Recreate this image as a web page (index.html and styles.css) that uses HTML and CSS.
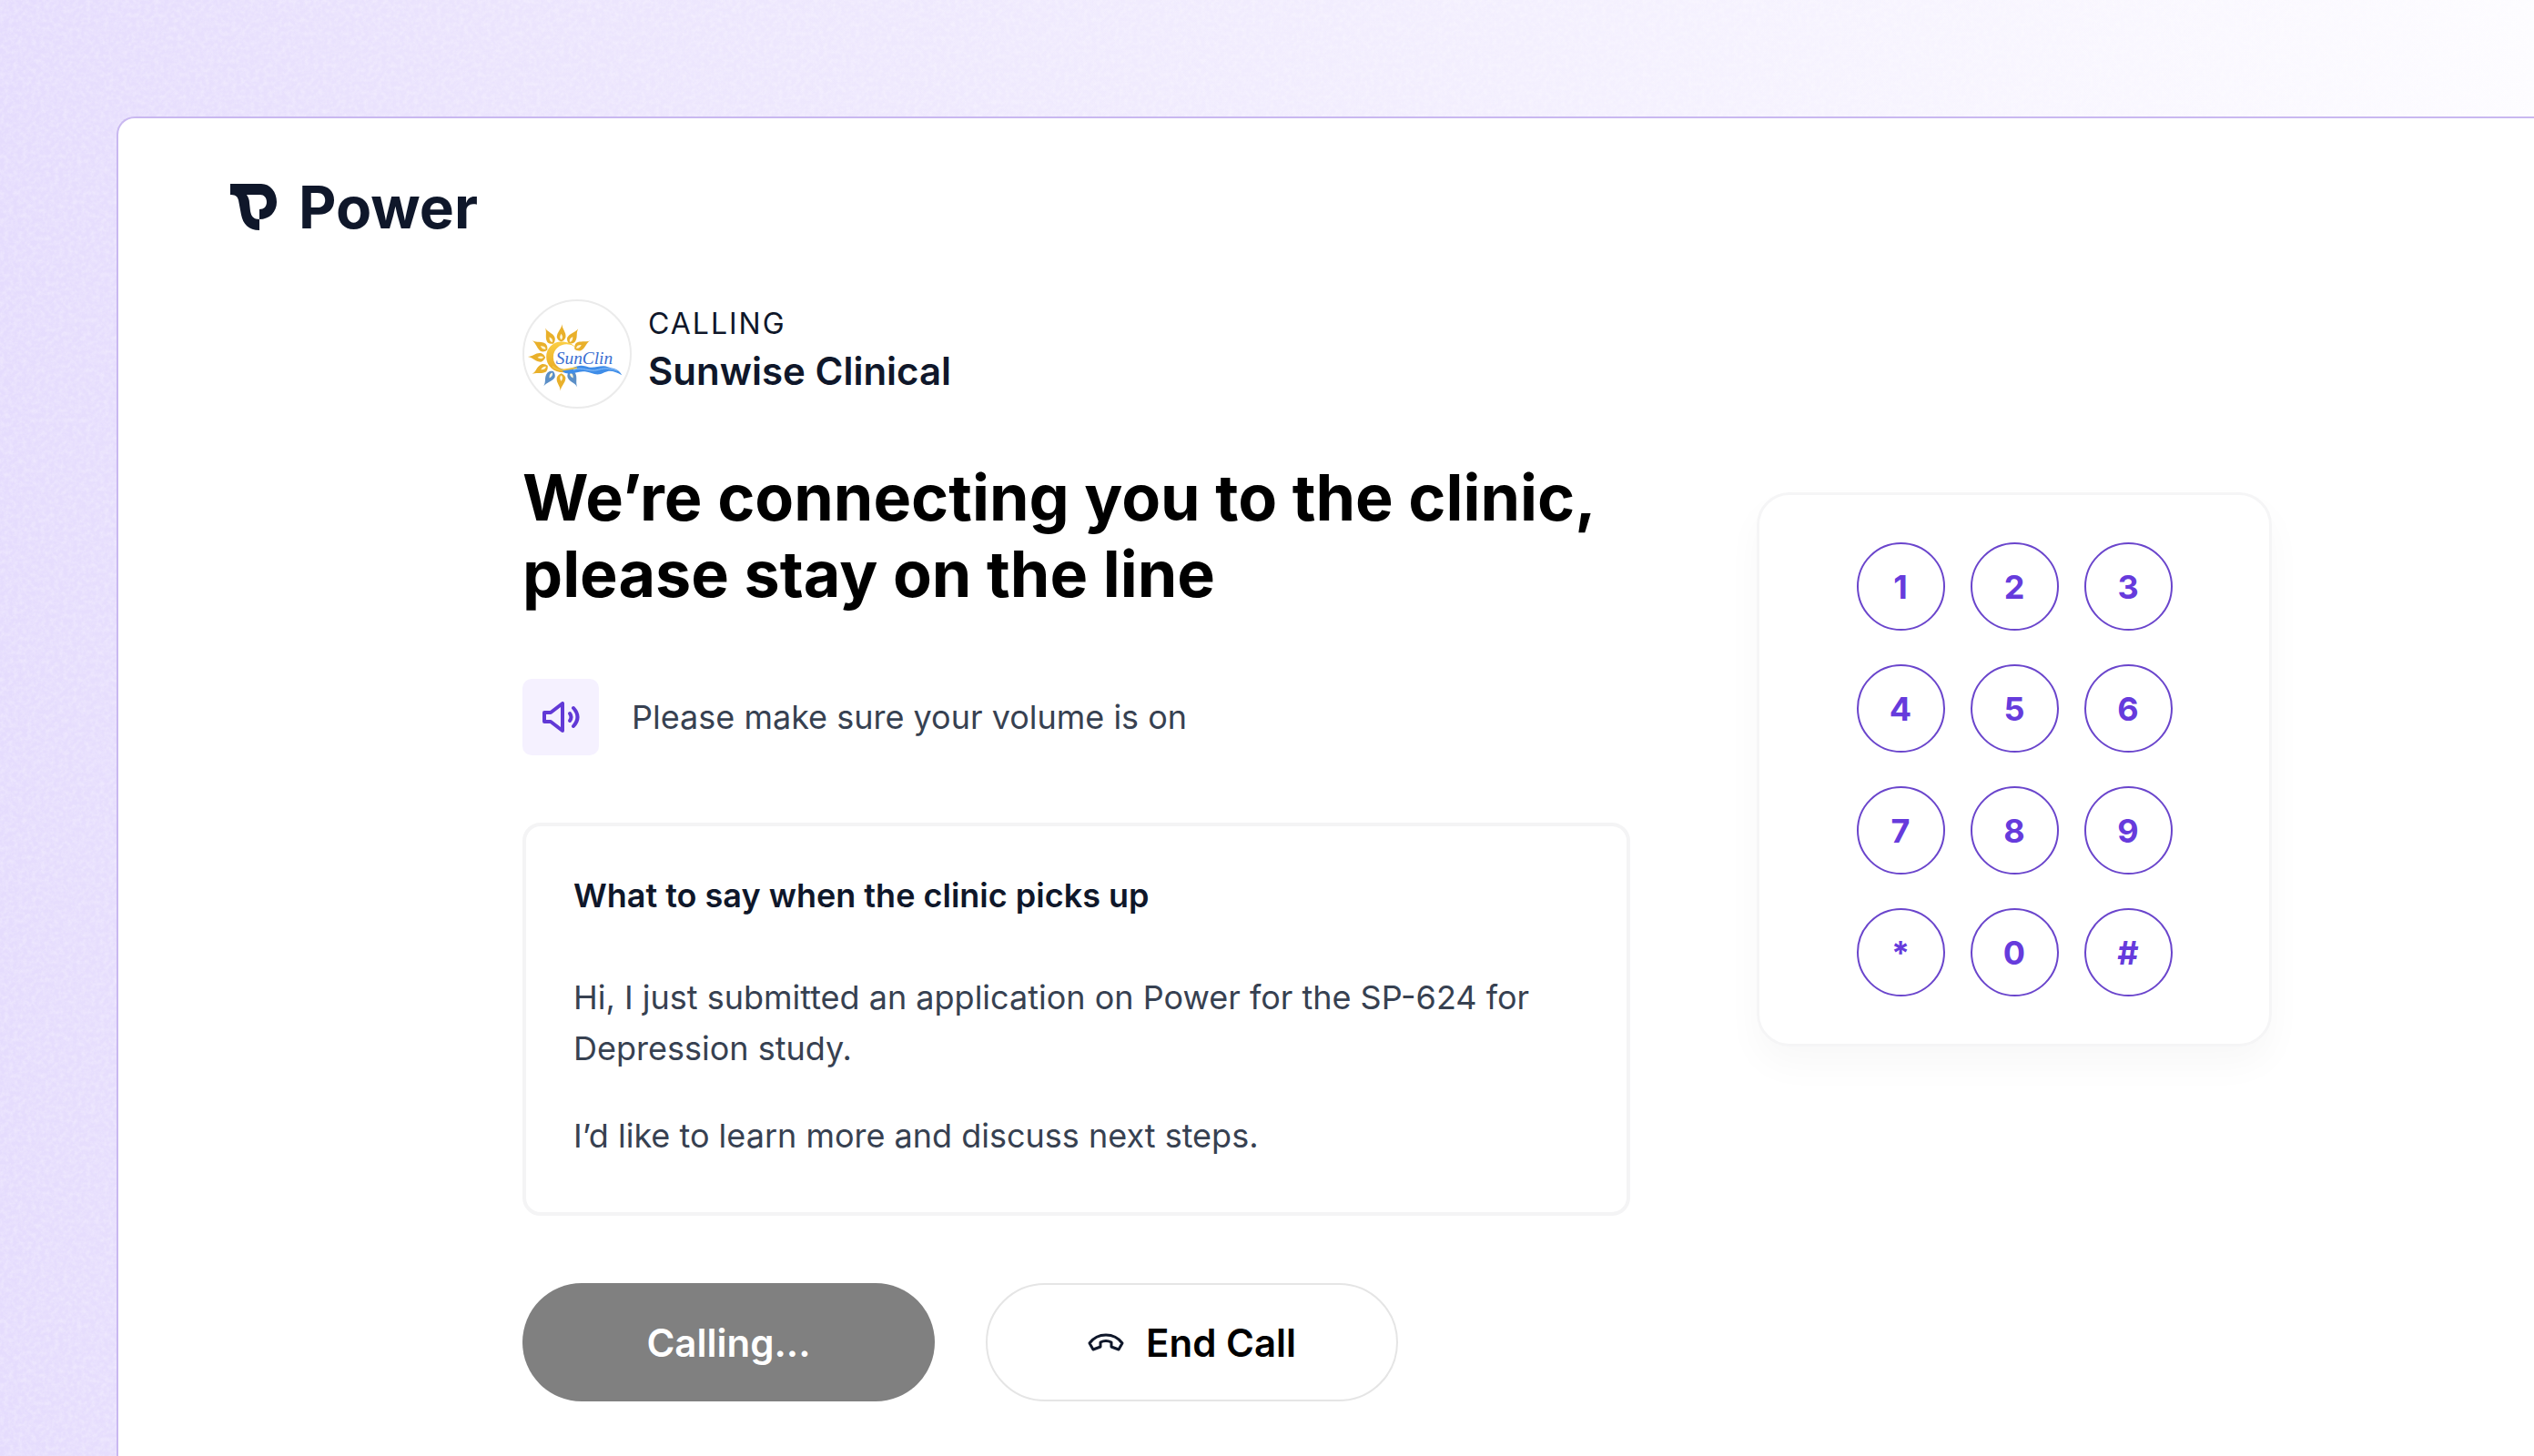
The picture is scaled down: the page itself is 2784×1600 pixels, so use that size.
FILE: index.html
```html
<!DOCTYPE html>
<html lang="en">
<head>
    <meta charset="UTF-8">
    <meta name="viewport" content="width=device-width, initial-scale=1.0">
    <title>Power - Calling Sunwise Clinical</title>
    <link rel="stylesheet" href="styles.css">
</head>
<body>

    <!-- paper grain over the purple gradient -->
    <svg class="grain" aria-hidden="true">
        <filter id="noise">
            <feTurbulence type="fractalNoise" baseFrequency="0.2" numOctaves="3"/>
            <feColorMatrix values="0 0 0 0 1  0 0 0 0 1  0 0 0 0 1  2 0 0 0 -0.7"/>
        </filter>
        <rect width="100%" height="100%" filter="url(#noise)"/>
    </svg>

    <div class="panel">
        <header>
            <a class="logo" href="#">
                <svg class="logo-mark" viewBox="0 0 51 52" aria-hidden="true">
                    <path fill="#0f172a" fill-rule="evenodd" d="M0 0H34C44 0 51 9 51 20C51 31 43 39 32 39V51C20 51 14 44 12 34L9 18C8 14 6 12 0 12ZM18 12C20 15 21 18 21 21L22 30C23 36 26 39 32 39V28C37 28 40 25 40 20C40 15 37 12 33 12Z"/>
                </svg>
                <span>Power</span>
            </a>
        </header>

        <main class="content">
            <section class="call">
                <div class="clinic">
                    <div class="avatar">
                        <svg viewBox="0 0 120 120" role="img" aria-label="SunClin">
                            <defs>
                                <linearGradient id="sun" x1="0" y1="0" x2="0" y2="1">
                                    <stop offset="0" stop-color="#fbcf45"/>
                                    <stop offset="1" stop-color="#e8a820"/>
                                </linearGradient>
                                <g id="ray">
                                    <path d="M1 -38C1 -32 6 -29 5 -23C4 -20 2 -19 0 -18C-2 -19 -4 -20 -5 -23C-5 -29 0 -32 1 -38Z"/>
                                    <path fill="#fff6d8" d="M0 -27C2 -24 2 -22 0 -20C-2 -22 -2 -24 0 -27Z"/>
                                </g>
                            </defs>
                            <g transform="translate(42 64)" fill="#e9b02a">
                                <use href="#ray" transform="rotate(58)"/>
                                <use href="#ray" transform="rotate(29)"/>
                                <use href="#ray"/>
                                <use href="#ray" transform="rotate(-30)"/>
                                <use href="#ray" transform="rotate(-61)"/>
                                <use href="#ray" transform="rotate(-90)"/>
                                <use href="#ray" transform="rotate(-121)"/>
                                <use href="#ray" fill="#5b8fc7" transform="rotate(-150)"/>
                                <use href="#ray" transform="rotate(180)"/>
                                <use href="#ray" fill="#5b8fc7" transform="rotate(150)"/>
                            </g>
                            <path fill="url(#sun)" d="M60 55C56 48 49 46 42 46C32 46 25 54 25 63C25 73 33 81 45 81L60 79C47 81 33 76 33 64C33 54 41 49 48 49C54 49 58 52 60 55Z"/>
                            <path fill="#3f8de8" d="M40 76C52 82 57 70 70 74C80 78 86 71 96 75C103 77 107 77 111 84C102 79 97 78 91 81C82 86 77 81 69 80C59 79 54 85 45 81Z"/>
                            <path fill="none" stroke="#f0c13f" stroke-width="2" d="M32 74C40 82 49 76 60 76"/>
                            <path fill="none" stroke="#8fc3fa" stroke-width="1" d="M56 78C66 74 74 81 84 78C93 75 99 77 106 79"/>
                            <text class="avatar-text" x="36" y="71">SunClin</text>
                        </svg>
                    </div>
                    <div class="clinic-info">
                        <p class="status">CALLING</p>
                        <p class="clinic-name">Sunwise Clinical</p>
                    </div>
                </div>

                <h1>We’re connecting you to the clinic, please stay on the line</h1>

                <div class="volume">
                    <div class="volume-icon">
                        <svg viewBox="0 0 42 34" fill="none" stroke="#6139d6" stroke-width="4" stroke-linejoin="round" stroke-linecap="round" aria-hidden="true">
                            <path d="M3 12H10L23 2V32L10 22H3Z"/>
                            <path d="M31 13Q34 17 31 21"/>
                            <path d="M35 7Q44 17 35 27"/>
                        </svg>
                    </div>
                    <p>Please make sure your volume is on</p>
                </div>

                <div class="script">
                    <h2>What to say when the clinic picks up</h2>
                    <p>Hi, I just submitted an application on Power for the SP-624 for Depression study.</p>
                    <p>I’d like to learn more and discuss next steps.</p>
                </div>

                <div class="actions">
                    <button class="btn btn-calling" disabled>Calling...</button>
                    <button class="btn btn-end">
                        <svg viewBox="0 0 40 20" fill="none" stroke="#0f172a" stroke-width="3" stroke-linejoin="round" aria-hidden="true">
                            <path d="M2 11C11 -1 29 -1 38 11L34 18L26 15V10C22 8 18 8 14 10V15L6 18Z"/>
                        </svg>
                        End Call
                    </button>
                </div>
            </section>

            <aside class="keypad">
                <button class="key">1</button>
                <button class="key">2</button>
                <button class="key">3</button>
                <button class="key">4</button>
                <button class="key">5</button>
                <button class="key">6</button>
                <button class="key">7</button>
                <button class="key">8</button>
                <button class="key">9</button>
                <button class="key">*</button>
                <button class="key">0</button>
                <button class="key">#</button>
            </aside>
        </main>
    </div>

</body>
</html>
```
FILE: styles.css
```css
*{
    margin: 0;
    padding: 0;
    box-sizing: border-box;
}

body {
    position: relative;
    min-height: 100vh;
    display: flex;
    padding: 128px 0 0 128px;
    font-family: Inter, "Liberation Sans", sans-serif;
    color: #0f172a;
    background: linear-gradient(90deg, #e5dcfd 0%, #ebe4fd 20%, #f3effe 60%, #fdfcff 100%);
}

.grain{
    position: absolute;
    top: 0;
    left: 0;
    width: 100%;
    height: 100%;
    opacity: 0.3;
}

.panel{
    position: relative;
    flex: 1;
    background-color: white;
    border: 2px solid #c9b8f0;
    border-right: none;
    border-bottom: none;
    border-top-left-radius: 20px;
    padding: 56px 288px 0 123px;
}

.logo{
    display: inline-flex;
    align-items: center;
    gap: 24px;
    color: #0f172a;
    text-decoration: none;
    font-size: 64px;
    font-weight: 700;
    line-height: 84px;
}
.logo-mark{
    width: 51px;
    height: 52px;
}

.content{
    display: grid;
    grid-template-columns: 1fr 566px;
    gap: 139px;
    align-items: start;
    margin-top: 59px;
    padding-left: 321px;
}

.clinic{
    display: flex;
    align-items: center;
    gap: 18px;
}
.avatar{
    width: 120px;
    height: 120px;
    border: 2px solid #ebebeb;
    border-radius: 50%;
}
.avatar svg{
    display: block;
}
.avatar-text{
    font-family: "Liberation Serif", serif;
    font-size: 20px;
    font-style: italic;
    fill: #3b6fd1;
}
.clinic-info{
    padding-bottom: 10px;
}
.status{
    font-size: 32px;
    line-height: 48px;
    letter-spacing: 2px;
}
.clinic-name{
    font-size: 42px;
    font-weight: 600;
    line-height: 56px;
}

h1{
    margin-top: 56px;
    font-size: 70px;
    font-weight: 700;
    line-height: 84px;
    color: black;
}

.volume{
    display: flex;
    align-items: center;
    gap: 36px;
    margin-top: 73px;
    font-size: 36px;
    line-height: 56px;
    color: #374151;
}
.volume-icon{
    display: flex;
    align-items: center;
    justify-content: center;
    width: 84px;
    height: 84px;
    border-radius: 10px;
    background-color: #f5f1ff;
}
.volume-icon svg{
    width: 42px;
    height: 34px;
}

.script{
    margin-top: 74px;
    padding: 48px 52px 56px;
    border: 4px solid #f4f4f5;
    border-radius: 20px;
    font-size: 36px;
    line-height: 56px;
    color: #374151;
}
.script h2{
    margin-bottom: 56px;
    font-size: 36px;
    font-weight: 600;
    color: #0f172a;
}
.script p + p{
    margin-top: 40px;
}

.actions{
    display: flex;
    gap: 56px;
    margin-top: 74px;
}
.btn{
    display: flex;
    align-items: center;
    justify-content: center;
    gap: 24px;
    width: 453px;
    height: 130px;
    border: none;
    border-radius: 65px;
    font-family: inherit;
    font-size: 42px;
    font-weight: 600;
}
.btn svg{
    width: 40px;
    height: 20px;
}
.btn-calling{
    background-color: #808080;
    color: white;
}
.btn-end{
    background-color: white;
    border: 2px solid #e5e5e5;
    color: black;
    cursor: pointer;
}

.keypad{
    display: grid;
    grid-template-columns: repeat(3, 97px);
    justify-content: center;
    gap: 37px 28px;
    margin-top: 212px;
    padding: 52px 0;
    border: 3px solid #f5f5f6;
    border-radius: 36px;
    box-shadow: 0 20px 40px rgba(15, 23, 42, 0.03);
}
.key{
    height: 97px;
    border: 2px solid #6a45cc;
    border-radius: 50%;
    background-color: white;
    color: #663bdc;
    font-family: inherit;
    font-size: 36px;
    font-weight: 700;
    cursor: pointer;
}
```
